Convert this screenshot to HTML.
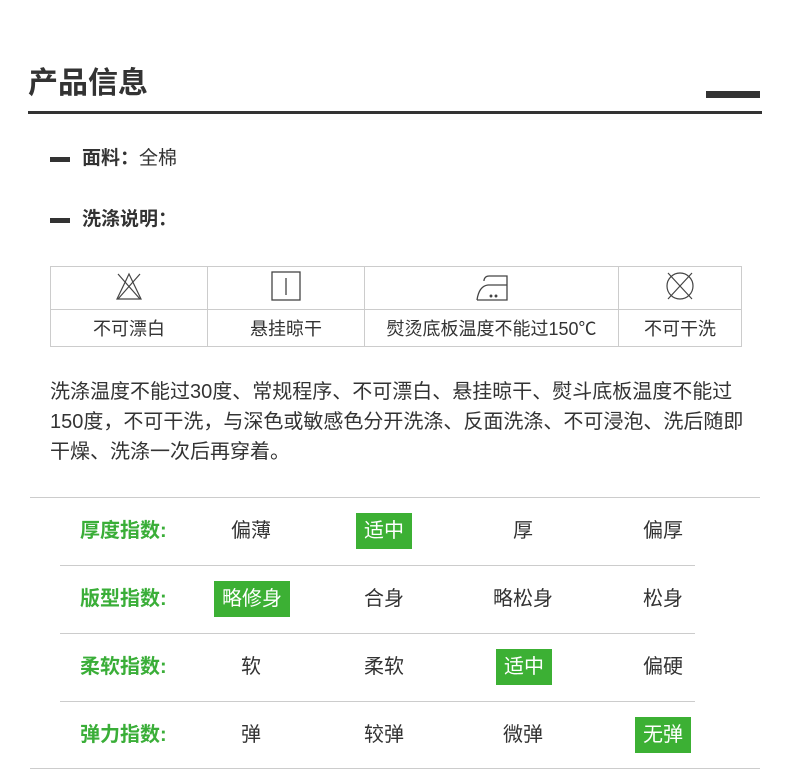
<!DOCTYPE html>
<html><head><meta charset="utf-8"><style>
*{margin:0;padding:0;box-sizing:border-box}
body{width:790px;height:769px;background:#fff;position:relative;overflow:hidden;font-family:"Liberation Sans","Noto Sans CJK SC",sans-serif;color:#333}
.a{position:absolute;white-space:nowrap}
.title{left:28px;top:64px;font-size:30px;font-weight:bold;color:#333;line-height:40px}
.bar{background:#333}
.h{font-size:19px;font-weight:bold;line-height:24px}
.h span{font-weight:normal}
table{position:absolute;left:50px;top:266px;border-collapse:collapse}
td{border:1px solid #ccc;text-align:center;font-size:18px;color:#333;padding:0}
p.t{position:absolute;left:50px;top:377px;width:720px;font-size:20px;letter-spacing:0;line-height:30px;color:#333;white-space:nowrap}
.hl{position:absolute;height:1px;background:#ccc}
.lb{position:absolute;left:80px;font-size:20px;font-weight:bold;color:#3aae38;line-height:30px}
.c{position:absolute;font-size:20px;line-height:30px;transform:translateX(-50%);color:#333}
.g{background:#3cb034;color:#fff;padding:0 8px;height:36px;line-height:36px}
</style></head><body>
<div class="a title">产品信息</div>
<div class="a bar" style="left:706px;top:91px;width:54px;height:7px"></div>
<div class="a bar" style="left:28px;top:111px;width:734px;height:3px"></div>

<div class="a bar" style="left:50px;top:157px;width:20px;height:5px"></div>
<div class="a h" style="left:82px;top:147px">面料：<span>全棉</span></div>
<div class="a bar" style="left:50px;top:218px;width:20px;height:5px"></div>
<div class="a h" style="left:82px;top:208px">洗涤说明：</div>

<table>
<tr style="height:43px">
<td style="width:157px"><svg width="32" height="32" viewBox="0 0 32 32" fill="none" stroke="#444" stroke-width="1.2"><path d="M16 4 L4 29 H28 Z"/><path d="M5 4 L27 29 M27 4 L5 29"/></svg></td>
<td style="width:157px"><svg width="32" height="32" viewBox="0 0 32 32" fill="none" stroke="#444" stroke-width="1.3"><rect x="2" y="2" width="28" height="28"/><path d="M16 8 V25"/></svg></td>
<td style="width:254px"><svg width="36" height="32" viewBox="0 0 36 32" fill="none" stroke="#444" stroke-width="1.3"><path d="M3 30 H33 V6 H15 Q11 6 10 10 L10 11"/><path d="M3 30 Q5 16 14 15 H33"/><circle cx="17" cy="26" r=".8" fill="#444"/><circle cx="22" cy="26" r=".8" fill="#444"/></svg></td>
<td style="width:123px"><svg width="32" height="32" viewBox="0 0 32 32" fill="none" stroke="#444" stroke-width="1.2"><circle cx="16" cy="16" r="13"/><path d="M4 3 L28 29 M28 3 L4 29"/></svg></td>
</tr>
<tr style="height:37px"><td>不可漂白</td><td>悬挂晾干</td><td>熨烫底板温度不能过150℃</td><td>不可干洗</td></tr>
</table>

<p class="t">洗涤温度不能过30度、常规程序、不可漂白、悬挂晾干、熨斗底板温度不能过<br>150度，不可干洗，与深色或敏感色分开洗涤、反面洗涤、不可浸泡、洗后随即<br>干燥、洗涤一次后再穿着。</p>

<div class="hl" style="left:30px;top:497px;width:730px"></div>
<div class="hl" style="left:60px;top:565px;width:635px"></div>
<div class="hl" style="left:60px;top:633px;width:635px"></div>
<div class="hl" style="left:60px;top:701px;width:635px"></div>
<div class="hl" style="left:30px;top:768px;width:730px"></div>

<div class="lb" style="top:516px">厚度指数:</div>
<div class="c" style="left:251px;top:516px">偏薄</div>
<div class="c g" style="left:384px;top:513px">适中</div>
<div class="c" style="left:523px;top:516px">厚</div>
<div class="c" style="left:663px;top:516px">偏厚</div>

<div class="lb" style="top:584px">版型指数:</div>
<div class="c g" style="left:252px;top:581px">略修身</div>
<div class="c" style="left:384px;top:584px">合身</div>
<div class="c" style="left:523px;top:584px">略松身</div>
<div class="c" style="left:663px;top:584px">松身</div>

<div class="lb" style="top:652px">柔软指数:</div>
<div class="c" style="left:251px;top:652px">软</div>
<div class="c" style="left:384px;top:652px">柔软</div>
<div class="c g" style="left:524px;top:649px">适中</div>
<div class="c" style="left:663px;top:652px">偏硬</div>

<div class="lb" style="top:720px">弹力指数:</div>
<div class="c" style="left:251px;top:720px">弹</div>
<div class="c" style="left:384px;top:720px">较弹</div>
<div class="c" style="left:523px;top:720px">微弹</div>
<div class="c g" style="left:663px;top:717px">无弹</div>
</body></html>
